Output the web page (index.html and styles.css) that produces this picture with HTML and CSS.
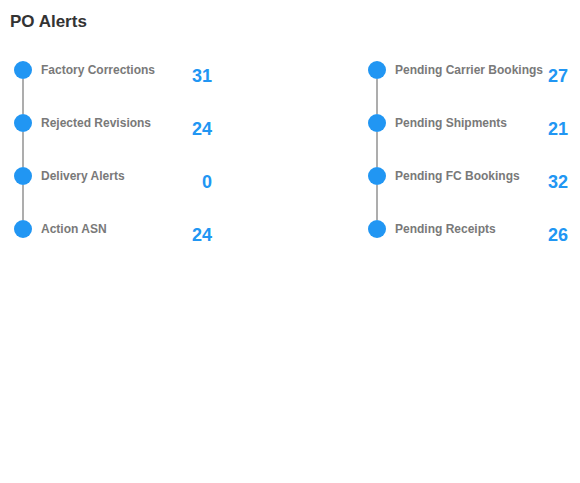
FILE: index.html
```html
<!DOCTYPE html>
<html lang="en">
<head>
    <meta charset="UTF-8">
    <meta name="viewport" content="width=device-width, initial-scale=1.0">
    <title>PO Alerts</title>
    <link rel="stylesheet" href="styles.css">
</head>
<body>
    <div class="alerts">
        <h1>PO Alerts</h1>

        <div class="columns">
            <ul class="timeline">
                <li class="step">
                    <div class="marker"><span class="dot"></span><span class="stem"></span></div>
                    <span class="label">Factory Corrections</span>
                    <span class="count">31</span>
                </li>
                <li class="step">
                    <div class="marker"><span class="dot"></span><span class="stem"></span></div>
                    <span class="label">Rejected Revisions</span>
                    <span class="count">24</span>
                </li>
                <li class="step">
                    <div class="marker"><span class="dot"></span><span class="stem"></span></div>
                    <span class="label">Delivery Alerts</span>
                    <span class="count">0</span>
                </li>
                <li class="step">
                    <div class="marker"><span class="dot"></span></div>
                    <span class="label">Action ASN</span>
                    <span class="count">24</span>
                </li>
            </ul>

            <ul class="timeline">
                <li class="step">
                    <div class="marker"><span class="dot"></span><span class="stem"></span></div>
                    <span class="label">Pending Carrier Bookings</span>
                    <span class="count">27</span>
                </li>
                <li class="step">
                    <div class="marker"><span class="dot"></span><span class="stem"></span></div>
                    <span class="label">Pending Shipments</span>
                    <span class="count">21</span>
                </li>
                <li class="step">
                    <div class="marker"><span class="dot"></span><span class="stem"></span></div>
                    <span class="label">Pending FC Bookings</span>
                    <span class="count">32</span>
                </li>
                <li class="step">
                    <div class="marker"><span class="dot"></span></div>
                    <span class="label">Pending Receipts</span>
                    <span class="count">26</span>
                </li>
            </ul>
        </div>
    </div>
</body>
</html>
```

FILE: styles.css
```css
body {
    margin: 0;
    padding: 11px 10px;
    font-family: "Liberation Sans", Arial, sans-serif;
    background-color: white;
}
h1 {
    margin: 0;
    font-size: 17px;
    font-weight: bold;
    color: #333;
    line-height: 21px;
}
.columns {
    display: grid;
    grid-template-columns: 198px 200px;
    column-gap: 156px;
    padding-left: 4px;
    margin-top: 29px;
}
.timeline {
    list-style: none;
    margin: 0;
    padding: 0;
}
.step {
    display: flex;
    height: 53px;
}
.marker {
    display: flex;
    flex-direction: column;
    align-items: center;
    width: 18px;
    flex-shrink: 0;
}
.dot {
    width: 18px;
    height: 18px;
    border-radius: 50%;
    background-color: #2196f3;
    flex-shrink: 0;
}
.stem {
    flex: 1;
    width: 2px;
    background-color: #adadad;
}
.label {
    margin-left: 9px;
    padding-top: 2px;
    font-size: 12px;
    font-weight: bold;
    line-height: 14px;
    color: #797979;
    white-space: nowrap;
}
.count {
    margin-left: auto;
    padding-top: 6px;
    font-size: 18px;
    font-weight: bold;
    line-height: 18px;
    color: #2196f3;
}
```
